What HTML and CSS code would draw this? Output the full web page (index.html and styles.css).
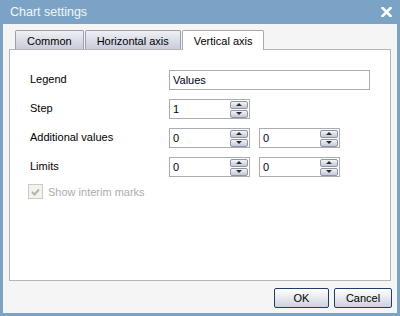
FILE: index.html
```html
<!DOCTYPE html>
<html lang="en">
<head>
  <meta charset="UTF-8">
  <title>Chart settings</title>
  <link rel="stylesheet" href="styles.css">
</head>
<body>
  <div class="window">
    <!-- Title bar -->
    <div class="titlebar">
      <span class="title">Chart settings</span>
      <svg class="close" width="11" height="10" viewBox="0 0 11 10">
        <path d="M1.5 1 L9.5 9 M9.5 1 L1.5 9" stroke="#ffffff" stroke-width="2.6" stroke-linecap="square"/>
      </svg>
    </div>

    <div class="body">
      <!-- Tabs -->
      <div class="tabs">
        <div class="tab">Common</div>
        <div class="tab">Horizontal axis</div>
        <div class="tab active">Vertical axis</div>
      </div>

      <!-- Tab page -->
      <div class="panel">
        <div class="row">
          <span class="label">Legend</span>
          <div class="input wide">Values</div>
        </div>
        <div class="row">
          <span class="label">Step</span>
          <div class="spin"><span class="value">1</span><span class="spin-btns"><i class="up"></i><i class="down"></i></span></div>
        </div>
        <div class="row">
          <span class="label">Additional values</span>
          <div class="spin"><span class="value">0</span><span class="spin-btns"><i class="up"></i><i class="down"></i></span></div>
          <div class="spin"><span class="value">0</span><span class="spin-btns"><i class="up"></i><i class="down"></i></span></div>
        </div>
        <div class="row">
          <span class="label">Limits</span>
          <div class="spin"><span class="value">0</span><span class="spin-btns"><i class="up"></i><i class="down"></i></span></div>
          <div class="spin"><span class="value">0</span><span class="spin-btns"><i class="up"></i><i class="down"></i></span></div>
        </div>
        <div class="check-row">
          <span class="checkbox">
            <svg width="9" height="8" viewBox="0 0 9 8">
              <path d="M1 4 L3.5 6.5 L8 1.5" fill="none" stroke="#b4b4ac" stroke-width="2"/>
            </svg>
          </span>
          <span class="check-label">Show interim marks</span>
        </div>
      </div>

      <!-- Buttons -->
      <div class="footer">
        <button class="btn ok">OK</button>
        <button class="btn cancel">Cancel</button>
      </div>
    </div>
  </div>
</body>
</html>
```

FILE: styles.css
```css
/* Reset */
* {
  margin: 0;
  padding: 0;
  box-sizing: border-box;
}

body {
  font-family: "Liberation Sans", Arial, sans-serif;
  font-size: 11px;
  color: #000000;
  background-color: #7ba3c5;
}

/* Window frame */
.window {
  width: 400px;
  height: 316px;
  background-color: #7ba3c5;
  padding: 0 3px 3px;
  display: flex;
  flex-direction: column;
}

.titlebar {
  height: 24px;
  display: flex;
  align-items: center;
  justify-content: space-between;
  padding: 0 5px 1px 7px;
}

.title {
  color: #f4f7fa;
  font-size: 12.5px;
}

.close {
  display: block;
  margin-top: 1px;
}

.body {
  flex: 1;
  background-color: #f5f5f5;
  display: flex;
  flex-direction: column;
  padding: 6px 0 0;
}

/* Tabs */
.tabs {
  display: flex;
  gap: 1px;
  padding-left: 12px;
  height: 20px;
  margin-bottom: -1px;
}

.tab {
  height: 19px;
  padding: 1px 11px 0;
  border: 1px solid #9d9eab;
  border-bottom: none;
  border-radius: 2px 2px 0 0;
  background: linear-gradient(#eef0f5, #c9ccd9);
  display: flex;
  align-items: center;
}

.tab.active {
  height: 20px;
  background: #ffffff;
  border-color: #a9a9a9;
  position: relative;
  z-index: 1;
}

/* Tab page */
.panel {
  flex: 1;
  margin: 0 6px;
  background-color: #ffffff;
  border: 1px solid #b5b5b5;
  padding: 20px 0 0 20px;
  display: flex;
  flex-direction: column;
  gap: 9px;
}

.row {
  display: flex;
  align-items: center;
  gap: 9px;
  height: 20px;
}

.label {
  width: 130px;
  padding-bottom: 2px;
}

.input,
.spin {
  height: 20px;
  border: 1px solid #a9adb2;
  background-color: #ffffff;
  display: flex;
  align-items: center;
  padding-left: 3px;
  color: #00001a;
}

.input.wide {
  width: 201px;
}

.spin {
  width: 81px;
}

.spin-btns {
  margin-left: auto;
  margin-right: 1px;
  display: flex;
  flex-direction: column;
  gap: 1px;
}

.spin-btns i {
  width: 18px;
  height: 8px;
  border: 1px solid #8e95a4;
  border-radius: 2px;
  background: linear-gradient(#f4f5f8, #c4c8d4);
  display: flex;
  align-items: center;
  justify-content: center;
}

.spin-btns i::after {
  content: "";
  border-left: 3px solid transparent;
  border-right: 3px solid transparent;
}

.spin-btns .up::after {
  border-bottom: 3px solid #2b2b2b;
}

.spin-btns .down::after {
  border-top: 3px solid #2b2b2b;
}

/* Disabled checkbox */
.check-row {
  display: flex;
  align-items: center;
  gap: 5px;
  margin-top: -2px;
  margin-left: -2px;
}

.checkbox {
  width: 15px;
  height: 15px;
  border: 1px solid #cbcbc3;
  background-color: #f3f3ee;
  display: flex;
  align-items: center;
  justify-content: center;
}

.check-label {
  color: #acacac;
}

/* Footer buttons */
.footer {
  display: flex;
  justify-content: flex-end;
  gap: 5px;
  padding: 7px 5px 5px;
}

.btn {
  height: 20px;
  font-family: "Liberation Sans", Arial, sans-serif;
  font-size: 11px;
  color: #000000;
  border: 1px solid #1f3d6b;
  border-radius: 2px;
  background: linear-gradient(#ffffff, #cfd2de);
}

.btn.ok {
  width: 55px;
}

.btn.cancel {
  width: 58px;
}
```
